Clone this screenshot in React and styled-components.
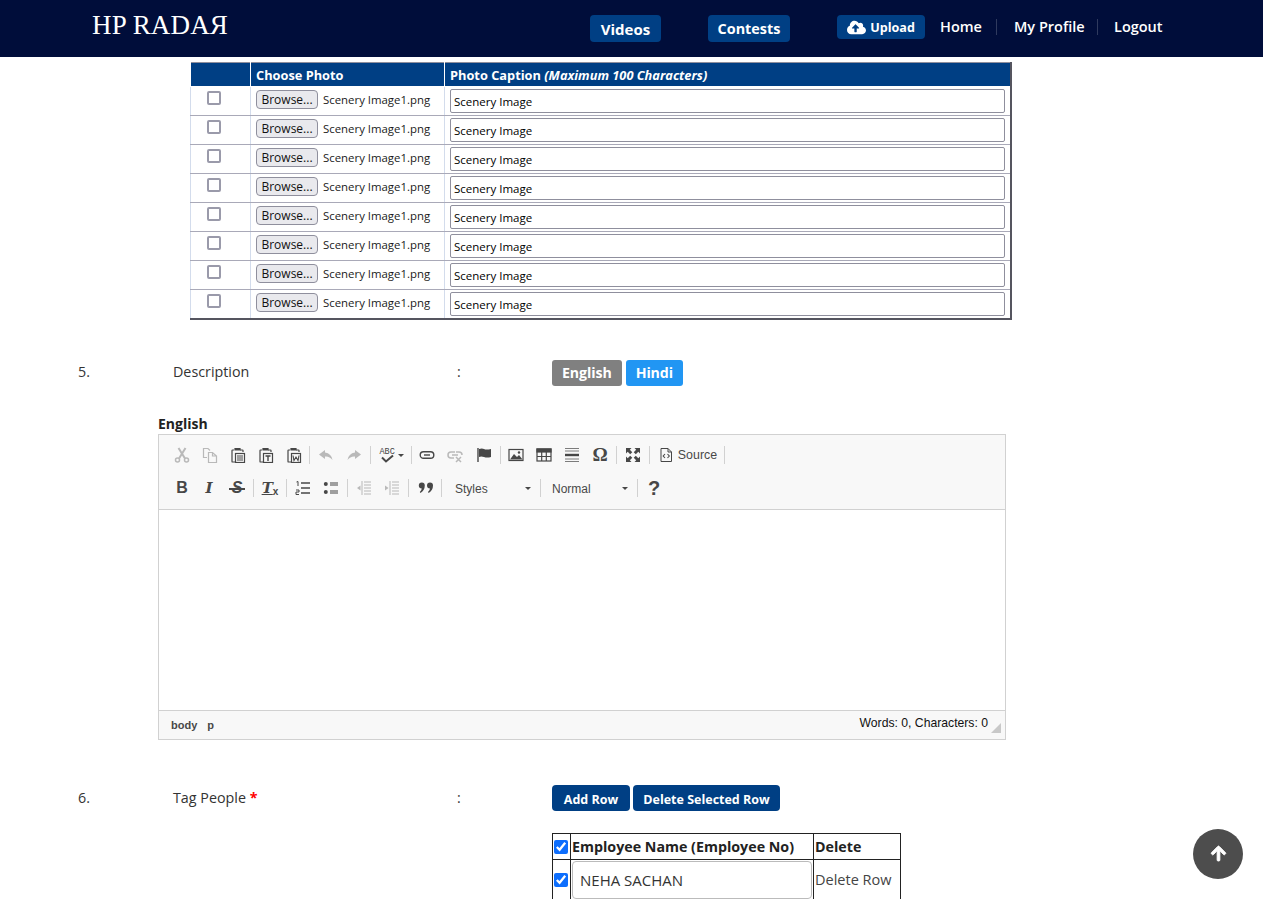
import React from "react";
import styled, { createGlobalStyle } from "styled-components";
import { FaCloudUploadAlt, FaArrowUp } from "react-icons/fa";

const GlobalStyle = createGlobalStyle`
  html, body {
    margin: 0;
    padding: 0;
    height: 899px;
    overflow: hidden;
    background: #fff;
  }
  * { box-sizing: border-box; }
  body {
    font-family: "Open Sans", "Noto Sans", sans-serif;
    color: #212529;
  }
`;

const Page = styled.div`
  width: 1263px;
`;

const Nav = styled.header`
  height: 57px;
  background: #000d3a;
  display: flex;
  align-items: flex-start;
  padding-left: 92px;
`;
const Logo = styled.div`
  font-family: "Liberation Serif", serif;
  font-size: 27px;
  letter-spacing: 0.15px;
  line-height: 27px;
  margin-top: 12px;
  color: #fff;
  width: 498px;
  white-space: nowrap;
`;
const NavButton = styled.a`
  height: 27px;
  margin-top: 15px;
  margin-right: 47px;
  width: ${p => p.$w}px;
  display: flex;
  align-items: center;
  justify-content: center;
  background: #003f84;
  border-radius: 4px;
  color: #fff;
  font-size: ${p => p.$fs || 14}px;
  font-weight: 700;
`;
const UploadButton = styled(NavButton)`
  height: 24px;
  margin-right: 15px;
  font-size: 12.6px;
  gap: 4px;
  svg { font-size: 19px; }
`;
const NavLink = styled.a`
  color: #fff;
  font-size: 14.5px;
  font-weight: 600;
  margin-top: 17px;
  line-height: 20px;
  width: ${p => p.$w}px;
  white-space: nowrap;
`;
const NavSep = styled.span`
  width: 1px;
  height: 16px;
  margin-top: 19px;
  margin-right: ${p => p.$mr}px;
  background: #2f3a5e;
`;

const PhotoTable = styled.table`
  margin: 5px 0 0 190px;
  width: 822px;
  height: 258px;
  border-collapse: collapse;
  table-layout: fixed;
  border-style: solid;
  border-color: #8f8f9d #55555f #55555f #8f8f9d;
  border-width: 1px 2px 2px 1px;
`;
const PhotoHead = styled.th`
  height: 24px;
  padding: 1px 5px 0;
  background: #003f84;
  color: #fff;
  font-size: 12.8px;
  font-weight: 700;
  text-align: left;
  border-left: 1px solid #fff;
  border-bottom: 1px solid #fff;
  white-space: nowrap;
  em { font-style: italic; }
`;
const PhotoCell = styled.td`
  height: 29px;
  padding: 2px 5px 0;
  vertical-align: top;
  border-left: 1px solid #d3dcec;
  border-bottom: 1px solid #a9a9b8;
  white-space: nowrap;
  font-size: 11.4px;
`;
const CheckCell = styled(PhotoCell)`
  padding: 4px 0 0 16px;
`;
const PlainCheck = styled.input.attrs({ type: "checkbox" })`
  appearance: none;
  display: block;
  margin: 0;
  width: 14px;
  height: 14px;
  background: #fff;
  border: 2px solid #9a9aaa;
  border-radius: 2px;
`;
const FileRow = styled.div`
  display: flex;
  align-items: center;
  gap: 5px;
  height: 22px;
  margin-top: -1px;
  color: #1a1a1a;
`;
const BrowseButton = styled.span`
  width: 62px;
  height: 19px;
  display: flex;
  align-items: center;
  justify-content: center;
  background: #e9e9ed;
  border: 1px solid #8f8f9d;
  border-radius: 4px;
  color: #111;
  font-size: 12px;
`;
const CaptionInput = styled.input`
  display: block;
  width: 555px;
  height: 24px;
  padding: 0 3px;
  border: 1px solid #8f8f9d;
  border-radius: 2px;
  background: #fff;
  color: #000;
  font-family: inherit;
  font-size: 11.5px;
`;

const FormRow = styled.section`
  display: grid;
  grid-template-columns: 95px 284px 95px 1fr;
  padding-left: 78px;
  margin-top: ${p => p.$top}px;
  font-size: 14.3px;
  line-height: ${p => p.$lh}px;
  color: #333;
`;
const FormValue = styled.div`
  display: flex;
  gap: ${p => p.$gap || 4}px;
`;
const Required = styled.b`
  color: #f00;
`;
const LangButton = styled.span`
  height: 26px;
  padding: 0 10px;
  display: flex;
  align-items: center;
  border-radius: 3px;
  color: #fff;
  font-size: 14.2px;
  font-weight: 700;
  letter-spacing: -0.1px;
  background: ${p => p.$bg};
`;
const ActionButton = styled.span`
  height: 26px;
  width: ${p => p.$w}px;
  padding-top: 3px;
  display: flex;
  align-items: center;
  justify-content: center;
  border-radius: 4px;
  background: #003f84;
  color: #fff;
  font-size: 12.5px;
  font-weight: 700;
  white-space: nowrap;
`;

const EditorLabel = styled.div`
  margin: 28px 0 0 158px;
  height: 20px;
  line-height: 20px;
  font-size: 14px;
  font-weight: 700;
  color: #222;
`;
const Editor = styled.div`
  margin-left: 158px;
  width: 848px;
  height: 306px;
  border: 1px solid #d1d1d1;
  display: flex;
  flex-direction: column;
  font-family: "Liberation Sans", Arial, sans-serif;
`;
const Toolbar = styled.div`
  height: 75px;
  padding: 8px 0 0 9px;
  background: #f8f8f8;
  border-bottom: 1px solid #d1d1d1;
`;
const ToolRow = styled.div`
  display: flex;
  align-items: center;
  height: 24px;
  & + & { margin-top: 9px; }
`;
const Tool = styled.span`
  flex: none;
  width: ${p => p.$w || 28}px;
  height: 24px;
  display: flex;
  align-items: center;
  justify-content: center;
  gap: ${p => p.$gap ?? 3}px;
  color: #474747;
  opacity: ${p => (p.$off ? 0.35 : 1)};
  svg { display: block; flex: none; }
`;
const ToolSep = styled.span`
  flex: none;
  width: 1px;
  height: 18px;
  margin: 0 ${p => p.$mr ?? 2}px 0 ${p => p.$ml ?? 1}px;
  background: #d1d1d1;
`;
const ToolLetter = styled.span`
  font-family: ${p => p.$family || '"Liberation Sans", sans-serif'};
  font-size: ${p => p.$size || 16}px;
  font-weight: 700;
  font-style: ${p => (p.$italic ? "italic" : "normal")};
  line-height: 16px;
  color: #474747;
`;
const StrikeLetter = styled(ToolLetter)`
  position: relative;
  &::after {
    content: "";
    position: absolute;
    left: -3px;
    right: -3px;
    top: 8px;
    height: 2px;
    background: #474747;
  }
`;
const ClearFormat = styled.span`
  display: flex;
  align-items: flex-end;
  u {
    font: italic 700 15px/15px "DejaVu Serif", serif;
    color: #474747;
  }
  i {
    font: 700 10px/9px "Liberation Sans", sans-serif;
    color: #474747;
  }
`;
const SourceText = styled.span`
  font-size: 12.4px;
  color: #484848;
`;
const Caret = styled.span`
  flex: none;
  width: 0;
  height: 0;
  border: 3px solid transparent;
  border-top-color: #474747;
  border-bottom: 0;
`;
const Combo = styled.span`
  flex: none;
  width: ${p => p.$w}px;
  height: 24px;
  padding: 1px 8px 0 ${p => p.$pl}px;
  display: flex;
  align-items: center;
  justify-content: space-between;
  font-size: 12px;
  color: #484848;
`;
const EditArea = styled.div`
  flex: 1;
  background: #fff;
`;
const StatusBar = styled.div`
  height: 29px;
  padding: 0 17px 0 12px;
  position: relative;
  display: flex;
  justify-content: space-between;
  background: #f8f8f8;
  border-top: 1px solid #d1d1d1;
`;
const PathBar = styled.div`
  display: flex;
  gap: 10px;
  padding-top: 8px;
  font-size: 11px;
  font-weight: 700;
  color: #484848;
`;
const WordCount = styled.div`
  padding-top: 5px;
  font-size: 12.2px;
  color: #111;
`;
const ResizeGrip = styled.span`
  position: absolute;
  right: 4px;
  bottom: 6px;
  width: 0;
  height: 0;
  border-style: solid;
  border-width: 0 0 10px 10px;
  border-color: transparent transparent #c8c8c8 transparent;
`;

const PeopleTable = styled.table`
  margin-top: 22px;
  width: 349px;
  border-collapse: collapse;
  table-layout: fixed;
  font-size: 14.5px;
`;
const PeopleCell = styled.td`
  height: 41px;
  padding: 0 1px;
  border: 1px solid #222;
  color: #444;
  line-height: 20px;
  white-space: nowrap;
`;
const PeopleHead = styled.th`
  height: 26px;
  padding: 1px 1px 0;
  border: 1px solid #222;
  color: #222;
  font-size: 14.25px;
  font-weight: 700;
  line-height: 20px;
  text-align: left;
  white-space: nowrap;
`;
const BlueCheck = styled.input.attrs({ type: "checkbox" })`
  display: block;
  margin: 0;
  width: 14px;
  height: 14px;
  accent-color: #0d6efd;
`;
const NameInput = styled.input`
  display: block;
  width: 240px;
  height: 38px;
  padding: 0 7px;
  border: 1px solid #bbb;
  border-radius: 4px;
  color: #333;
  font-family: inherit;
  font-size: 15px;
`;
const ColumnValue = styled.div``;

const ScrollTop = styled.a`
  position: fixed;
  left: 1193px;
  top: 829px;
  width: 50px;
  height: 50px;
  border-radius: 50%;
  background: #4d4d4d;
  color: #fff;
  display: flex;
  align-items: center;
  justify-content: center;
  font-size: 17px;
  svg {
    stroke: currentColor;
    stroke-width: 30;
    margin-top: -2px;
  }
`;

const Svg = ({ children, w = 16, h = 16 }) => (
  <svg width={w} height={h} viewBox={`0 0 ${w} ${h}`} fill="none" stroke="currentColor" strokeWidth="1.2">
    {children}
  </svg>
);

const Clipboard = ({ children }) => (
  <Svg>
    <path d="M4 3H2.6Q2 3 2 3.6V14.4Q2 15 2.6 15H5" />
    <path d="M5 3V1.5H10V3Z" fill="currentColor" />
    <path d="M10 3H12.4Q13 3 13 3.6V5" />
    <rect x="5.5" y="6.5" width="9" height="9" />
    {children}
  </Svg>
);

const icons = {
  cut: (
    <Svg>
      <circle cx="3.5" cy="13" r="2" strokeWidth="1.5" />
      <circle cx="12.5" cy="13" r="2" strokeWidth="1.5" />
      <path d="M5 11.5L11.5 1M11 11.5L4.5 1" strokeWidth="2" />
    </Svg>
  ),
  copy: (
    <Svg>
      <path d="M5 10.5H1.5V1.5H6L8 3.5" />
      <path d="M6.5 5.5H10.5L14.5 9V15.5H6.5ZM10.5 5.5V9H14.5" />
    </Svg>
  ),
  paste: <Clipboard><path d="M7 9H13M7 11H13M7 13H13" /></Clipboard>,
  pasteText: <Clipboard><path d="M7.5 9H12.5M10 9V14" strokeWidth="1.4" /></Clipboard>,
  pasteWord: <Clipboard><path d="M7 8.5L8 13.5L10 10L12 13.5L13 8.5" strokeWidth="1.1" /></Clipboard>,
  undo: (
    <Svg>
      <path d="M7 3L1 7.5L7 12V9.5Q11.5 9 14.5 13Q13.5 6.5 7 5.5Z" fill="currentColor" stroke="none" />
    </Svg>
  ),
  redo: (
    <Svg>
      <path d="M9 3L15 7.5L9 12V9.5Q4.5 9 1.5 13Q2.5 6.5 9 5.5Z" fill="currentColor" stroke="none" />
    </Svg>
  ),
  spell: (
    <svg width="16" height="16" viewBox="0 0 16 16" fill="none" stroke="currentColor">
      <text x="0.5" y="7" fontFamily="Liberation Mono, monospace" fontSize="8.5" fontWeight="400" fill="currentColor" stroke="none">ABC</text>
      <path d="M3 10.5L7 14.5L14 8.5" strokeWidth="2" />
    </svg>
  ),
  link: (
    <Svg>
      <rect x="1.2" y="4.7" width="13.6" height="6.6" rx="3.3" strokeWidth="1.4" />
      <path d="M5 8H11" strokeWidth="1.4" />
    </Svg>
  ),
  unlink: (
    <Svg>
      <path d="M8 5H4Q1 5 1 8T4 11H7M5 8H11M9 5H12Q15 5 15 8" strokeWidth="1.5" />
      <path d="M9 10L14 15M14 10L9 15" strokeWidth="1.5" />
    </Svg>
  ),
  flag: (
    <Svg>
      <path d="M2 1V15" strokeWidth="1.4" />
      <path d="M3 2Q6 1 8 2T15 2V10Q11 11 8 10T3 10Z" fill="currentColor" stroke="none" />
    </Svg>
  ),
  image: (
    <Svg>
      <rect x="1" y="2.5" width="14" height="11" />
      <path d="M2 12.5L6 7L9 10L11 8L14.5 12.5Z" fill="currentColor" stroke="none" />
      <circle cx="11" cy="5.5" r="1.2" fill="currentColor" stroke="none" />
    </Svg>
  ),
  table: (
    <Svg>
      <rect x="1" y="2" width="14" height="12" />
      <rect x="1" y="2" width="14" height="3" fill="currentColor" />
      <path d="M1 9.5H15M5.7 5V14M10.3 5V14" />
    </Svg>
  ),
  hr: (
    <Svg>
      <path d="M1 1.5H15M1 4H15M1 12H15M1 14.5H15" strokeWidth="1" opacity="0.7" />
      <path d="M1 8H15" strokeWidth="2.4" />
    </Svg>
  ),
  maximize: (
    <Svg>
      <path d="M1 1H6.5L4.8 2.7L7.3 5.2L5.2 7.3L2.7 4.8L1 6.5Z M15 1V6.5L13.3 4.8L10.8 7.3L8.7 5.2L11.2 2.7L9.5 1Z M1 15V9.5L2.7 11.2L5.2 8.7L7.3 10.8L4.8 13.3L6.5 15Z M15 15H9.5L11.2 13.3L8.7 10.8L10.8 8.7L13.3 11.2L15 9.5Z" fill="currentColor" stroke="none" />
    </Svg>
  ),
  source: (
    <Svg>
      <path d="M3 1.5H10L13.5 5V14.5H3ZM10 1.5V5H13.5" strokeWidth="1" />
      <path d="M7 7L5.2 9L7 11M9.5 7L11.3 9L9.5 11" strokeWidth="1.1" />
    </Svg>
  ),
  ol: (
    <Svg>
      <path d="M6 3H15M6 8H15M6 13H15" strokeWidth="1.4" />
      <path d="M1.5 2L3 1.5V6M1 10H4V12H1V14.5H4" strokeWidth="1" />
    </Svg>
  ),
  ul: (
    <Svg>
      <circle cx="2.8" cy="4" r="2" fill="currentColor" stroke="none" />
      <circle cx="2.8" cy="12" r="2" fill="currentColor" stroke="none" />
      <path d="M7 3H15M7 5H15M7 11H15M7 13H15" strokeWidth="1.2" />
    </Svg>
  ),
  outdent: (
    <Svg>
      <path d="M8 2H15M8 5H15M8 8H15M8 11H15M8 14H15M6 1V15" strokeWidth="1" />
      <path d="M1 8L4.5 5.5V10.5Z" fill="currentColor" stroke="none" />
    </Svg>
  ),
  indent: (
    <Svg>
      <path d="M8 2H15M8 5H15M8 8H15M8 11H15M8 14H15M6 1V15" strokeWidth="1" />
      <path d="M4.5 8L1 5.5V10.5Z" fill="currentColor" stroke="none" />
    </Svg>
  ),
  quote: (
    <Svg>
      <path d="M0.8 5.5A3 3 0 0 1 6.8 5.5Q6.8 10.2 2.5 13L1.8 12Q3.6 10.4 3.8 8.5A3 3 0 0 1 0.8 5.5Z" fill="currentColor" stroke="none" />
      <path d="M9 5.5A3 3 0 0 1 15 5.5Q15 10.2 10.7 13L10 12Q11.8 10.4 12 8.5A3 3 0 0 1 9 5.5Z" fill="currentColor" stroke="none" />
    </Svg>
  ),
};

const photoRows = [0, 1, 2, 3, 4, 5, 6, 7];

export default function App() {
  return (
    <Page>
      <GlobalStyle />
      <Nav>
        <Logo>HP RADAЯ</Logo>
        <NavButton $w={71} $fs={15}>Videos</NavButton>
        <NavButton $w={82} $fs={14.4}>Contests</NavButton>
        <UploadButton $w={88}><FaCloudUploadAlt />Upload</UploadButton>
        <NavLink $w={56}>Home</NavLink>
        <NavSep $mr={17} />
        <NavLink $w={83}>My Profile</NavLink>
        <NavSep $mr={16} />
        <NavLink $w={52}>Logout</NavLink>
      </Nav>

      <PhotoTable>
        <colgroup>
          <col width="60" />
          <col width="194" />
          <col />
        </colgroup>
        <thead>
          <tr>
            <PhotoHead />
            <PhotoHead>Choose Photo</PhotoHead>
            <PhotoHead>Photo Caption <em>(Maximum 100 Characters)</em></PhotoHead>
          </tr>
        </thead>
        <tbody>
          {photoRows.map(i => (
            <tr key={i}>
              <CheckCell><PlainCheck readOnly /></CheckCell>
              <PhotoCell>
                <FileRow>
                  <BrowseButton>Browse...</BrowseButton>
                  Scenery Image1.png
                </FileRow>
              </PhotoCell>
              <PhotoCell><CaptionInput readOnly value="Scenery Image" /></PhotoCell>
            </tr>
          ))}
        </tbody>
      </PhotoTable>

      <FormRow $top={40} $lh={24}>
        <span>5.</span>
        <span>Description</span>
        <span>:</span>
        <FormValue>
          <LangButton $bg="#808080">English</LangButton>
          <LangButton $bg="#2196f3">Hindi</LangButton>
        </FormValue>
      </FormRow>

      <EditorLabel>English</EditorLabel>
      <Editor>
        <Toolbar>
          <ToolRow>
            <Tool $off>{icons.cut}</Tool>
            <Tool $off>{icons.copy}</Tool>
            <Tool>{icons.paste}</Tool>
            <Tool>{icons.pasteText}</Tool>
            <Tool>{icons.pasteWord}</Tool>
            <ToolSep />
            <Tool $off>{icons.undo}</Tool>
            <Tool $off>{icons.redo}</Tool>
            <ToolSep $ml={2} $mr={1} />
            <Tool $w={38}>{icons.spell}<Caret /></Tool>
            <ToolSep $mr={1} />
            <Tool>{icons.link}</Tool>
            <Tool $off>{icons.unlink}</Tool>
            <Tool $w={30}>{icons.flag}</Tool>
            <ToolSep $mr={1} />
            <Tool>{icons.image}</Tool>
            <Tool>{icons.table}</Tool>
            <Tool>{icons.hr}</Tool>
            <Tool><ToolLetter $size={19} $family='"Liberation Serif", serif'>Ω</ToolLetter></Tool>
            <ToolSep $ml={2} />
            <Tool>{icons.maximize}</Tool>
            <ToolSep $ml={2} />
            <Tool $w={71} $gap={4}>{icons.source}<SourceText>Source</SourceText></Tool>
            <ToolSep />
          </ToolRow>
          <ToolRow>
            <Tool><ToolLetter>B</ToolLetter></Tool>
            <Tool $w={26}><ToolLetter $family='"DejaVu Serif", serif' $italic $size={15}>I</ToolLetter></Tool>
            <Tool $w={30}><StrikeLetter $italic>S</StrikeLetter></Tool>
            <ToolSep />
            <Tool><ClearFormat><u>T</u><i>x</i></ClearFormat></Tool>
            <ToolSep $ml={2} />
            <Tool>{icons.ol}</Tool>
            <Tool>{icons.ul}</Tool>
            <ToolSep $ml={2} />
            <Tool $off>{icons.outdent}</Tool>
            <Tool $off>{icons.indent}</Tool>
            <ToolSep $ml={2} $mr={3} />
            <Tool>{icons.quote}</Tool>
            <ToolSep />
            <Combo $w={95} $pl={11}>Styles<Caret /></Combo>
            <ToolSep />
            <Combo $w={93} $pl={9}>Normal<Caret /></Combo>
            <ToolSep />
            <Tool><ToolLetter $size={20}>?</ToolLetter></Tool>
          </ToolRow>
        </Toolbar>
        <EditArea />
        <StatusBar>
          <PathBar><span>body</span><span>p</span></PathBar>
          <WordCount>Words: 0, Characters: 0</WordCount>
          <ResizeGrip />
        </StatusBar>
      </Editor>

      <FormRow $top={45} $lh={26}>
        <span>6.</span>
        <span>Tag People <Required>*</Required></span>
        <span>:</span>
        <ColumnValue>
          <FormValue $gap={3}>
            <ActionButton $w={78}>Add Row</ActionButton>
            <ActionButton $w={147}>Delete Selected Row</ActionButton>
          </FormValue>
          <PeopleTable>
            <colgroup>
              <col width="18" />
              <col width="243" />
              <col />
            </colgroup>
            <thead>
              <tr>
                <PeopleHead><BlueCheck defaultChecked /></PeopleHead>
                <PeopleHead>Employee Name (Employee No)</PeopleHead>
                <PeopleHead>Delete</PeopleHead>
              </tr>
            </thead>
            <tbody>
              <tr>
                <PeopleCell><BlueCheck defaultChecked /></PeopleCell>
                <PeopleCell><NameInput readOnly value="NEHA SACHAN" /></PeopleCell>
                <PeopleCell>Delete Row</PeopleCell>
              </tr>
            </tbody>
          </PeopleTable>
        </ColumnValue>
      </FormRow>

      <ScrollTop><FaArrowUp /></ScrollTop>
    </Page>
  );
}
